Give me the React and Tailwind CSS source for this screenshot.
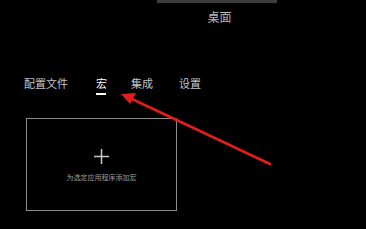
const tabs = ['配置文件', '宏', '集成', '设置']

function Arrow() {
  return (
    <svg className="pointer-events-none absolute left-0 top-0" width="366" height="229" viewBox="0 0 366 229">
      <line x1="270" y1="164" x2="132" y2="99" stroke="#e11d1d" strokeWidth="2.6" strokeLinecap="round" />
      <polygon points="121,94 136,93 130,104" fill="#e11d1d" />
    </svg>
  )
}

export default function App() {
  return (
    <div
      className="relative h-[229px] w-[366px] overflow-hidden bg-black"
      style={{ fontFamily: '"Noto Sans CJK SC", "Noto Sans", sans-serif' }}
    >
      <div className="ml-[157px] flex w-[120px] flex-col items-center">
        <div className="h-[3px] w-full bg-[#3d3d3d]" />
        <div className="mt-[7px] pl-[5px] text-[12px] leading-[14px] text-[#b8b8b8]">桌面</div>
      </div>

      <div className="mt-[53px] flex pl-[24px] text-[11px] leading-[12px]">
        <div className="w-[72px] text-[#c4c4c4]">配置文件</div>
        <div className="flex w-[35px] flex-col items-start">
          <span className="text-white">宏</span>
          <span className="mt-[4px] h-[2px] w-[10px] bg-white" />
        </div>
        <div className="w-[48px] text-[#c4c4c4]">集成</div>
        <div className="text-[#c4c4c4]">设置</div>
      </div>

      <div className="ml-[26px] mt-[23px] flex h-[93px] w-[151px] flex-col items-center border border-[#8c8c8c]">
        <svg className="mt-[30px]" width="15" height="15" viewBox="0 0 15 15">
          <path d="M7.5 0V15M0 7.5H15" stroke="#c8c8c8" strokeWidth="1.5" />
        </svg>
        <div className="mt-[9px] text-[7px] leading-[8px] text-[#9a9a9a]">为选定应用程序添加宏</div>
      </div>

      <Arrow />
    </div>
  )
}
